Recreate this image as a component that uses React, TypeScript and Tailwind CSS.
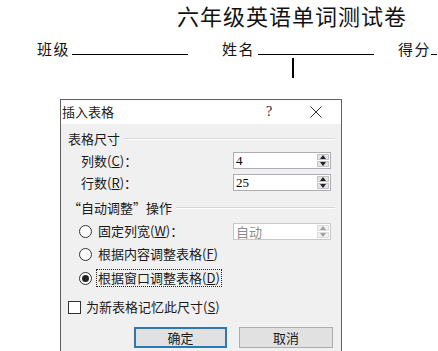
import React from 'react'

const cjk = "font-['Noto_Sans_CJK_SC',sans-serif]"

function Key({ k }: { k: string }) {
  return (
    <span>
      (<span className="underline underline-offset-1">{k}</span>)
    </span>
  )
}

function Arrow({ up, disabled }: { up?: boolean; disabled?: boolean }) {
  const fill = disabled ? '#a0a0a0' : '#222222'
  return (
    <div className={`flex flex-1 items-center justify-center border ${disabled ? 'border-[#dddddd] bg-[#f0f0f0]' : 'border-[#c4c4c4] bg-[#e4e4e4]'}`}>
      <svg width="6" height="4" viewBox="0 0 6 4">
        {up ? <polygon points="0,4 6,4 3,0" fill={fill} /> : <polygon points="0,0 6,0 3,4" fill={fill} />}
      </svg>
    </div>
  )
}

function Spin({ value, disabled }: { value: string; disabled?: boolean }) {
  return (
    <div className={`ml-auto mr-[4px] flex h-[17px] w-[98px] border bg-white ${disabled ? 'border-[#c8c8c8]' : 'border-[#abadb3]'}`}>
      <span
        className={`flex-1 pl-[2px] text-[13px] leading-[15px] ${disabled ? 'text-[#8c8c8c]' : "font-['Liberation_Serif',serif] text-black"}`}
      >
        {value}
      </span>
      <div className="flex w-[13px] flex-col gap-px py-px pr-px">
        <Arrow up disabled={disabled} />
        <Arrow disabled={disabled} />
      </div>
    </div>
  )
}

function Radio({ checked }: { checked?: boolean }) {
  return (
    <span className="flex h-[13px] w-[13px] shrink-0 items-center justify-center rounded-full border border-[#333333] bg-white">
      {checked && <span className="h-[7px] w-[7px] rounded-full bg-[#222222]" />}
    </span>
  )
}

function GroupLabel({ children }: { children: React.ReactNode }) {
  return (
    <div className="flex h-[18px] items-center gap-[4px] leading-[18px]">
      <span>{children}</span>
      <div className="h-[2px] flex-1 border-b border-white bg-[#d6d6d6]" />
    </div>
  )
}

export default function App() {
  return (
    <div className={`h-[351px] w-[438px] overflow-hidden bg-white text-[#111111] ${cjk}`}>
      <h1 className="pl-[177px] pt-[4px] text-[22px] leading-[22px] tracking-[1px] text-[#111111]">六年级英语单词测试卷</h1>

      <div className="mt-[14px] flex h-[18px] items-end whitespace-nowrap pl-[37px] text-[15px] leading-[18px] tracking-[1.5px]">
        <span className="shrink-0">班级</span>
        <span className="mb-[3px] ml-[2px] h-px w-[116px] shrink-0 bg-black" />
        <span className="ml-[34px] shrink-0">姓名</span>
        <span className="mb-[3px] ml-[3px] h-px w-[116px] shrink-0 bg-black" />
        <span className="ml-[24px] shrink-0">得分</span>
        <span className="mb-[3px] h-px w-[6px] shrink-0 bg-black" />
      </div>

      <div className="ml-[292px] h-[20px] w-[2px] bg-black" />

      <div className="ml-[60px] mt-[21px] w-[282px] border border-[#5f5f5f] text-[13px] text-[#1a1a1a]">
        <div className="flex h-[24px] items-center bg-white pl-[1px]">
          <span className="leading-[18px]">插入表格</span>
          <span className="ml-auto w-[20px] text-center font-['Liberation_Serif',serif] text-[14px] leading-[18px]">?</span>
          <span className="ml-[25px] mr-[13px] flex w-[24px] justify-center">
            <svg width="12" height="12" viewBox="0 0 12 12">
              <path d="M0.5 0.5 L11.5 11.5 M11.5 0.5 L0.5 11.5" stroke="#333333" strokeWidth="1" />
            </svg>
          </span>
        </div>

        <div className="bg-[#f0f0f0] pb-[6px] pl-[7px] pr-[6px] pt-[6px]">
          <GroupLabel>表格尺寸</GroupLabel>
          <div className="mt-[4px] flex h-[17px] items-center pl-[13px]">
            <span>列数<Key k="C" />：</span>
            <Spin value="4" />
          </div>
          <div className="mt-[5px] flex h-[17px] items-center pl-[13px]">
            <span>行数<Key k="R" />：</span>
            <Spin value="25" />
          </div>

          <div className="mt-[8px]">
            <GroupLabel>“自动调整”操作</GroupLabel>
          </div>
          <div className="mt-[5px] flex h-[18px] items-center gap-[6px] pl-[11px]">
            <Radio />
            <span>固定列宽<Key k="W" />：</span>
            <Spin value="自动" disabled />
          </div>
          <div className="mt-[5px] flex h-[18px] items-center gap-[6px] pl-[11px]">
            <Radio />
            <span>根据内容调整表格<Key k="F" /></span>
          </div>
          <div className="mt-[6px] flex h-[18px] items-center gap-[4px] pl-[11px]">
            <Radio checked />
            <span className="border border-dotted border-[#222222] px-[1px] leading-[16px]">根据窗口调整表格<Key k="D" /></span>
          </div>

          <div className="mt-[11px] flex h-[18px] items-center gap-[5px]">
            <span className="h-[13px] w-[13px] border border-[#333333] bg-white" />
            <span>为新表格记忆此尺寸<Key k="S" /></span>
          </div>

          <div className="mt-[11px] flex justify-end gap-[12px] pr-[2px]">
            <button className="h-[21px] w-[93px] border-2 border-[#2f78ad] bg-[#e1e1e1] leading-[17px]">确定</button>
            <button className="h-[21px] w-[94px] border border-[#adadad] bg-[#e1e1e1] leading-[19px]">取消</button>
          </div>
        </div>
      </div>
    </div>
  )
}
